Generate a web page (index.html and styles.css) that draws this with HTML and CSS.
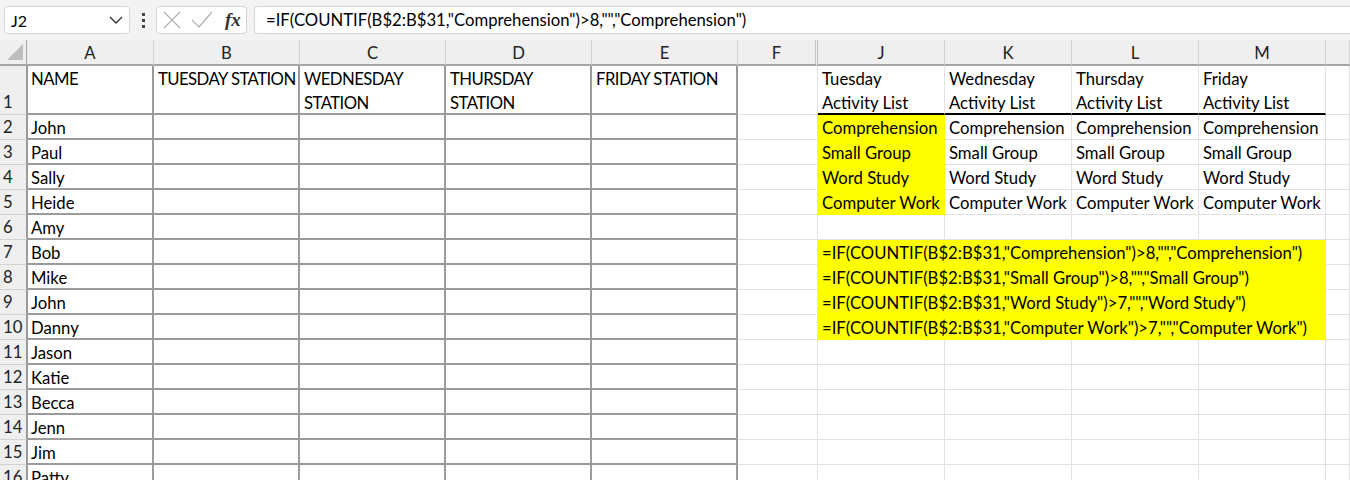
FILE: index.html
```html
<!DOCTYPE html>
<html>
<head>
<meta charset="utf-8">
<link rel="stylesheet" href="styles.css">
</head>
<body>
<div class="topbar">
  <div class="namebox"><span class="ref">J2</span>
    <svg class="chev" width="14" height="8" viewBox="0 0 14 8"><path d="M1 1 L7 7 L13 1" fill="none" stroke="#333" stroke-width="1.4"/></svg>
  </div>
  <div class="dots"><i></i><i></i><i></i></div>
  <div class="fxbox">
    <svg width="18" height="18" viewBox="0 0 18 18"><path d="M1 1 L17 17 M17 1 L1 17" stroke="#b4b4b4" stroke-width="1.3" fill="none"/></svg>
    <svg width="22" height="18" viewBox="0 0 22 18"><path d="M1 9 L8 16 L21 1" stroke="#b4b4b4" stroke-width="1.3" fill="none"/></svg>
    <span class="fx">fx</span>
  </div>
  <div class="formula">=IF(COUNTIF(B$2:B$31,"Comprehension")&gt;8,"","Comprehension")</div>
</div>
<div class="sheet">
  <div class="row hdr">
    <div class="corner"><svg width="16" height="16" viewBox="0 0 16 16"><path d="M16 0 L16 16 L0 16 Z" fill="#bdbdbd"/></svg></div>
    <div class="ch">A</div><div class="ch">B</div><div class="ch">C</div><div class="ch">D</div><div class="ch">E</div>
    <div class="ch hid">F</div><div class="ch">J</div><div class="ch">K</div><div class="ch">L</div><div class="ch">M</div><div class="ch"></div>
  </div>
  <div class="row r1">
    <div class="rh">1</div>
    <div class="c t caps">NAME</div><div class="c t caps">TUESDAY STATION</div><div class="c t caps">WEDNESDAY<br>STATION</div><div class="c t caps">THURSDAY<br>STATION</div><div class="c t caps">FRIDAY STATION</div>
    <div class="c"></div>
    <div class="c bb">Tuesday<br>Activity List</div><div class="c bb">Wednesday<br>Activity List</div><div class="c bb">Thursday<br>Activity List</div><div class="c bb">Friday<br>Activity List</div><div class="c"></div>
  </div>
  <div class="row">
    <div class="rh">2</div>
    <div class="c t">John</div><div class="c t"></div><div class="c t"></div><div class="c t"></div><div class="c t"></div>
    <div class="c"></div>
    <div class="c y">Comprehension</div><div class="c">Comprehension</div><div class="c">Comprehension</div><div class="c">Comprehension</div><div class="c"></div>
  </div>
  <div class="row">
    <div class="rh">3</div>
    <div class="c t">Paul</div><div class="c t"></div><div class="c t"></div><div class="c t"></div><div class="c t"></div>
    <div class="c"></div>
    <div class="c y">Small Group</div><div class="c">Small Group</div><div class="c">Small Group</div><div class="c">Small Group</div><div class="c"></div>
  </div>
  <div class="row">
    <div class="rh">4</div>
    <div class="c t">Sally</div><div class="c t"></div><div class="c t"></div><div class="c t"></div><div class="c t"></div>
    <div class="c"></div>
    <div class="c y">Word Study</div><div class="c">Word Study</div><div class="c">Word Study</div><div class="c">Word Study</div><div class="c"></div>
  </div>
  <div class="row">
    <div class="rh">5</div>
    <div class="c t">Heide</div><div class="c t"></div><div class="c t"></div><div class="c t"></div><div class="c t"></div>
    <div class="c"></div>
    <div class="c y">Computer Work</div><div class="c">Computer Work</div><div class="c">Computer Work</div><div class="c">Computer Work</div><div class="c"></div>
  </div>
  <div class="row">
    <div class="rh">6</div>
    <div class="c t">Amy</div><div class="c t"></div><div class="c t"></div><div class="c t"></div><div class="c t"></div>
    <div class="c"></div>
    <div class="c"></div><div class="c"></div><div class="c"></div><div class="c"></div><div class="c"></div>
  </div>
  <div class="row">
    <div class="rh">7</div>
    <div class="c t">Bob</div><div class="c t"></div><div class="c t"></div><div class="c t"></div><div class="c t"></div>
    <div class="c"></div>
    <div class="c y span4">=IF(COUNTIF(B$2:B$31,"Comprehension")&gt;8,"","Comprehension")</div><div class="c"></div>
  </div>
  <div class="row">
    <div class="rh">8</div>
    <div class="c t">Mike</div><div class="c t"></div><div class="c t"></div><div class="c t"></div><div class="c t"></div>
    <div class="c"></div>
    <div class="c y span4">=IF(COUNTIF(B$2:B$31,"Small Group")&gt;8,"","Small Group")</div><div class="c"></div>
  </div>
  <div class="row">
    <div class="rh">9</div>
    <div class="c t">John</div><div class="c t"></div><div class="c t"></div><div class="c t"></div><div class="c t"></div>
    <div class="c"></div>
    <div class="c y span4">=IF(COUNTIF(B$2:B$31,"Word Study")&gt;7,"","Word Study")</div><div class="c"></div>
  </div>
  <div class="row">
    <div class="rh">10</div>
    <div class="c t">Danny</div><div class="c t"></div><div class="c t"></div><div class="c t"></div><div class="c t"></div>
    <div class="c"></div>
    <div class="c y span4">=IF(COUNTIF(B$2:B$31,"Computer Work")&gt;7,"","Computer Work")</div><div class="c"></div>
  </div>
  <div class="row">
    <div class="rh">11</div>
    <div class="c t">Jason</div><div class="c t"></div><div class="c t"></div><div class="c t"></div><div class="c t"></div>
    <div class="c"></div><div class="c"></div><div class="c"></div><div class="c"></div><div class="c"></div><div class="c"></div>
  </div>
  <div class="row">
    <div class="rh">12</div>
    <div class="c t">Katie</div><div class="c t"></div><div class="c t"></div><div class="c t"></div><div class="c t"></div>
    <div class="c"></div><div class="c"></div><div class="c"></div><div class="c"></div><div class="c"></div><div class="c"></div>
  </div>
  <div class="row">
    <div class="rh">13</div>
    <div class="c t">Becca</div><div class="c t"></div><div class="c t"></div><div class="c t"></div><div class="c t"></div>
    <div class="c"></div><div class="c"></div><div class="c"></div><div class="c"></div><div class="c"></div><div class="c"></div>
  </div>
  <div class="row">
    <div class="rh">14</div>
    <div class="c t">Jenn</div><div class="c t"></div><div class="c t"></div><div class="c t"></div><div class="c t"></div>
    <div class="c"></div><div class="c"></div><div class="c"></div><div class="c"></div><div class="c"></div><div class="c"></div>
  </div>
  <div class="row">
    <div class="rh">15</div>
    <div class="c t">Jim</div><div class="c t"></div><div class="c t"></div><div class="c t"></div><div class="c t"></div>
    <div class="c"></div><div class="c"></div><div class="c"></div><div class="c"></div><div class="c"></div><div class="c"></div>
  </div>
  <div class="row">
    <div class="rh">16</div>
    <div class="c t">Patty</div><div class="c t"></div><div class="c t"></div><div class="c t"></div><div class="c t"></div>
    <div class="c"></div><div class="c"></div><div class="c"></div><div class="c"></div><div class="c"></div><div class="c"></div>
  </div>
</div>
</body>
</html>
```

FILE: styles.css
```css
* { box-sizing: border-box; }
html, body { margin: 0; padding: 0; }
body {
  width: 1350px;
  height: 480px;
  overflow: hidden;
  background: #fff;
  font-family: Lato, "Liberation Sans", sans-serif;
  font-size: 16.7px;
  color: #000;
}
.topbar {
  height: 40px;
  background: #f3f3f3;
  display: flex;
  align-items: center;
  padding-left: 4px;
}
.namebox {
  width: 126px;
  height: 28px;
  background: #fff;
  border: 1px solid #d4d4d4;
  border-radius: 4px;
  display: flex;
  align-items: center;
  justify-content: space-between;
  padding: 0 6px 0 6px;
  font-size: 16px;
}
.dots {
  width: 26px;
  display: flex;
  flex-direction: column;
  align-items: center;
  gap: 3px;
}
.dots i { display: block; width: 3px; height: 3px; background: #444; }
.fxbox {
  width: 91px;
  height: 28px;
  background: #fff;
  border: 1px solid #d4d4d4;
  border-radius: 4px;
  display: flex;
  align-items: center;
  padding-left: 6px;
  gap: 10px;
}
.fx {
  font-family: "Liberation Serif", serif;
  font-style: italic;
  font-weight: bold;
  font-size: 19px;
  color: #333;
  margin-left: 2px;
}
.formula {
  flex: 1;
  margin-left: 7px;
  height: 28px;
  background: #fff;
  border: 1px solid #d4d4d4;
  border-right: none;
  border-radius: 4px 0 0 4px;
  padding-left: 11px;
  line-height: 26px;
  white-space: nowrap;
}
.row {
  display: grid;
  grid-template-columns: 27px 127px 146px 146px 146px 146px 80px 127px 127px 127px 127px 24px;
  height: 25px;
}
.row.r1 { height: 49px; }
.hdr { height: 26px; background: #efefef; }
.corner {
  border-bottom: 2px solid #a6a6a6;
  border-right: 1px solid #a6a6a6;
  display: flex;
  align-items: flex-end;
  justify-content: flex-end;
  padding: 0 3px 4px 0;
}
.ch {
  text-align: center;
  padding-top: 3px;
  line-height: 21px;
  color: #222;
  border-right: 1px solid #d0d0d0;
  border-bottom: 2px solid #a6a6a6;
  background: #efefef;
}
.ch.hid { border-right: 3px double #c4c4c4; }
.rh {
  background: #efefef;
  border-right: 1px solid #9b9b9b;
  border-bottom: 1px solid #d2d2d2;
  padding-left: 3px;
  line-height: 24px;
  color: #222;
  display: flex;
  align-items: flex-end;
}
.c {
  border-right: 1px solid #e1e1e1;
  border-bottom: 1px solid #e1e1e1;
  padding-left: 4px;
  padding-top: 1px;
  line-height: 24px;
  white-space: nowrap;
  overflow: hidden;
}
.c.caps { letter-spacing: -0.55px; }
.c.t {
  border-right: 2px solid #9b9b9b;
  border-bottom: 2px solid #9b9b9b;
}
.row > .rh + .c.t { border-left: 1px solid #9b9b9b; padding-left: 3px; }
.c.bb { border-bottom: 2px solid #000; }
.c.y { background: #ffff00; border-color: #ffff00; }
.c.span4 { grid-column: span 4; }
```
